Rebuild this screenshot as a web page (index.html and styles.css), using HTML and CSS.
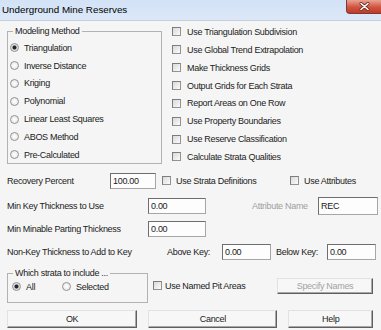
FILE: index.html
```html
<!DOCTYPE html>
<html lang="en">
<head>
  <meta charset="UTF-8" />
  <title>Underground Mine Reserves</title>
  <link rel="stylesheet" href="styles.css">
</head>
<body>

  <div class="window">
    <div class="titlebar">
      <span class="title">Underground Mine Reserves</span>
      <span class="close">
        <svg width="11" height="9" viewBox="0 0 11 9">
          <path d="M2 1.5 L9 7.5 M9 1.5 L2 7.5" stroke="#6a2a22" stroke-width="3" stroke-linecap="round"/>
          <path d="M2 1.5 L9 7.5 M9 1.5 L2 7.5" stroke="#fff" stroke-width="1.6" stroke-linecap="round"/>
        </svg>
      </span>
    </div>

    <div class="content">
      <!-- method + options -->
      <div class="top">
        <div class="group methods">
          <div class="group-title">Modeling Method</div>
          <label class="opt"><span class="radio on"></span>Triangulation</label>
          <label class="opt"><span class="radio"></span>Inverse Distance</label>
          <label class="opt"><span class="radio"></span>Kriging</label>
          <label class="opt"><span class="radio"></span>Polynomial</label>
          <label class="opt"><span class="radio"></span>Linear Least Squares</label>
          <label class="opt"><span class="radio"></span>ABOS Method</label>
          <label class="opt"><span class="radio"></span>Pre-Calculated</label>
        </div>
        <div class="checks">
          <label class="opt"><span class="check"></span>Use Triangulation Subdivision</label>
          <label class="opt"><span class="check"></span>Use Global Trend Extrapolation</label>
          <label class="opt"><span class="check"></span>Make Thickness Grids</label>
          <label class="opt"><span class="check"></span>Output Grids for Each Strata</label>
          <label class="opt"><span class="check"></span>Report Areas on One Row</label>
          <label class="opt"><span class="check"></span>Use Property Boundaries</label>
          <label class="opt"><span class="check"></span>Use Reserve Classification</label>
          <label class="opt"><span class="check"></span>Calculate Strata Qualities</label>
        </div>
      </div>

      <!-- numeric fields -->
      <div class="row row-rec">
        <span class="lbl lbl-rec">Recovery Percent</span>
        <input class="field f-rec" value="100.00">
        <label class="opt strata-def"><span class="check"></span>Use Strata Definitions</label>
        <label class="opt"><span class="check"></span>Use Attributes</label>
      </div>
      <div class="row row-key">
        <span class="lbl lbl-wide">Min Key Thickness to Use</span>
        <input class="field f-mid" value="0.00">
        <span class="lbl disabled attr-name">Attribute Name</span>
        <input class="field f-attr" value="REC">
      </div>
      <div class="row row-part">
        <span class="lbl lbl-wide">Min Minable Parting Thickness</span>
        <input class="field f-mid" value="0.00">
      </div>
      <div class="row row-nonkey">
        <span class="lbl lbl-nonkey">Non-Key Thickness to Add to Key</span>
        <span class="lbl lbl-above">Above Key:</span>
        <input class="field f-small" value="0.00">
        <span class="lbl lbl-below">Below Key:</span>
        <input class="field f-small" value="0.00">
      </div>

      <!-- strata selection -->
      <div class="row row-strata">
        <div class="group strata">
          <div class="group-title">Which strata to include ...</div>
          <div class="strata-opts">
            <label class="opt opt-all"><span class="radio on"></span>All</label>
            <label class="opt"><span class="radio"></span>Selected</label>
          </div>
        </div>
        <label class="opt named"><span class="check"></span>Use Named Pit Areas</label>
        <button class="btn btn-specify" disabled>Specify Names</button>
      </div>

      <div class="row row-buttons">
        <button class="btn btn-ok">OK</button>
        <button class="btn btn-cancel">Cancel</button>
        <button class="btn btn-help">Help</button>
      </div>
    </div>
  </div>

</body>
</html>
```

FILE: styles.css
```css
/* ─── Reset & Body ───────────────────────────────────────────────────────── */
* { box-sizing: border-box; margin: 0; padding: 0; }
body {
  background: #f5f5f5;
  font-family: "Liberation Sans", Arial, sans-serif;
  font-size: 9px;
  letter-spacing: -0.3px;
  color: #1b1b1b;
}

/* ─── Window ─────────────────────────────────────────────────────────────── */
.window {
  width: 381px;
  height: 330px;
  overflow: hidden;
}
.titlebar {
  display: flex;
  align-items: flex-start;
  height: 21px;
  background: linear-gradient(#d3e2f6, #dce8f8);
  border-bottom: 1px solid #c4cfdc;
}
.title {
  font-size: 9.8px;
  letter-spacing: 0;
  line-height: 20px;
  padding-left: 2px;
  color: #000;
}
.close {
  margin-left: auto;
  width: 35px;
  height: 14px;
  display: flex;
  align-items: center;
  justify-content: center;
  background: linear-gradient(#e9a394, #d0543f 55%, #c0392a);
  border: 1px solid #7d3a30;
  border-top: none;
  border-right: none;
  border-radius: 0 0 0 4px;
}

.content { padding: 0 8px 0 7px; }

/* ─── Shared controls ────────────────────────────────────────────────────── */
.opt {
  display: flex;
  align-items: center;
  white-space: nowrap;
}
.radio {
  width: 9px;
  height: 9px;
  border: 1px solid #929292;
  border-radius: 50%;
  background: radial-gradient(circle, #fff 0, #e2e2e2 100%);
  margin: 0 5px 0 2px;
  flex: none;
}
.radio.on { background: radial-gradient(circle, #262626 0 1.6px, #d8d8d8 2.4px, #f6f6f6 100%); }
.check {
  width: 9px;
  height: 9px;
  border: 1px solid #939393;
  border-top-color: #7d7d7d;
  border-left-color: #7d7d7d;
  background: linear-gradient(135deg, #d9d9d9, #fbfbfb);
  margin-right: 5px;
  flex: none;
}
.field {
  height: 16px;
  border: 1px solid #a6a6a6;
  border-top-color: #6e6e6e;
  border-left-color: #6e6e6e;
  background: #fdfdfd;
  font: inherit;
  letter-spacing: inherit;
  color: #1b1b1b;
  padding: 0 2px;
  line-height: 12px;
  outline: none;
}
.btn {
  height: 18px;
  font: inherit;
  letter-spacing: inherit;
  color: #1b1b1b;
  background: #f7f7f7;
  border: 1px solid;
  border-color: #e2e2e2 #5f5f5f #5f5f5f #e2e2e2;
  box-shadow: inset -1px -1px 0 #a8a8a8;
}
.btn:disabled { color: #a2a2a2; }
.disabled { color: #9e9e9e; }

/* ─── Group boxes ────────────────────────────────────────────────────────── */
.group {
  border: 1px solid #b2b2b2;
  flex: none;
}
.group-title {
  width: fit-content;
  line-height: 13px;
  margin: -7px 0 0 5px;
  padding: 0 2px;
  background: #f5f5f5;
}

/* ─── Top section ────────────────────────────────────────────────────────── */
.top {
  display: flex;
  align-items: flex-start;
}
.methods {
  width: 155px;
  height: 133px;
  margin-top: 10px;
}
.methods .group-title { margin-bottom: 1px; }
.methods .opt { height: 17.8px; }
.checks {
  margin: 2px 0 0 10px;
}
.checks .opt { height: 17.86px; }
.checks .check { margin-right: 6px; }

/* ─── Field rows ─────────────────────────────────────────────────────────── */
.row {
  display: flex;
  align-items: center;
  height: 16px;
}
.lbl { white-space: nowrap; flex: none; }
.row-rec { margin-top: 7px; }
.lbl-rec { width: 103px; }
.f-rec { width: 46px; }
.strata-def { width: 128px; margin-left: 6px; }

.row-key { margin-top: 9px; }
.lbl-wide { width: 141px; }
.f-mid { width: 58px; }
.attr-name { width: 66px; margin-left: 46px; }
.f-attr { width: 60px; height: 18px; }

.row-part { margin-top: 7px; }

.row-nonkey { margin-top: 7px; }
.lbl-nonkey { width: 160px; }
.lbl-above { width: 55px; }
.f-small { width: 49px; }
.lbl-below { width: 51px; margin-left: 5px; }

/* ─── Strata + buttons ───────────────────────────────────────────────────── */
.row-strata {
  height: 30px;
  margin-top: 13px;
  align-items: flex-start;
}
.strata {
  width: 141px;
  height: 30px;
}
.strata-opts {
  display: flex;
  height: 14px;
}
.strata .radio { margin-left: 4px; }
.opt-all { width: 50px; }
.named { margin: 8px 0 0 5px; }
.named .check { margin-right: 3px; }
.btn-specify {
  width: 96px;
  height: 16px;
  margin: 5px 0 0 auto;
}

.row-buttons {
  height: 18px;
  margin-top: 7px;
  gap: 11px;
}
.btn-ok { width: 131px; }
.btn-cancel { width: 130px; }
.btn-help { width: 85px; }
```
